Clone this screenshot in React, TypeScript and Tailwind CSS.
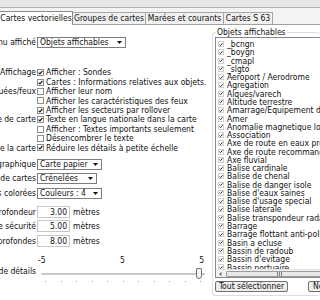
import React from 'react';

const items = [
  '_bcngn', '_boygn', '_cmapl', '_slgto', 'Aeroport / Aerodrome', 'Agregation', 'Alques/varech',
  'Altitude terrestre', 'Amarrage/Equipement de mouillage', 'Amer', 'Anomalie magnetique locale',
  'Association', 'Axe de route en eaux profondes', 'Axe de route recommande', 'Axe fluvial',
  'Balise cardinale', 'Balise de chenal', 'Balise de danger isole', "Balise d'eaux saines",
  "Balise d'usage special", 'Balise laterale', 'Balise transpondeur radar', 'Barrage',
  'Barrage flottant anti-pollution', 'Basin a ecluse', 'Bassin de radoub', "Bassin d'evitage",
];

const Tick = () => (
  <svg width="5" height="5" viewBox="0 0 5 5">
    <path d="M0.6 2.6 L1.9 3.9 L4.4 1" stroke="#1a1a1a" strokeWidth="1.2" fill="none" />
  </svg>
);

const Check = ({ on, label }: { on: boolean; label: string }) => (
  <div className="flex h-[9.4px] items-center gap-[2px] whitespace-nowrap">
    <span className="flex h-[7px] w-[7px] shrink-0 items-center justify-center border border-[#8e8f8f] bg-white">
      {on && <Tick />}
    </span>
    <span>{label}</span>
  </div>
);

const Arrow = () => (
  <svg width="5" height="3" viewBox="0 0 5 3">
    <path d="M0 0 H5 L2.5 3 Z" fill="#111" />
  </svg>
);

const Select = ({ value, w }: { value: string; w: string }) => (
  <div className={`flex h-[11px] items-center justify-between border border-[#7d7d7d] bg-white pl-[2px] pr-[3px] ${w}`}>
    <span className="whitespace-nowrap">{value}</span>
    <Arrow />
  </div>
);

const Label = ({ text, h }: { text: string; h: string }) => (
  <div className={`flex w-[36px] shrink-0 items-center justify-end whitespace-nowrap ${h}`}>{text}</div>
);

const Depth = ({ label, value }: { label: string; value: string }) => (
  <div className="flex h-[14.5px] items-center">
    <Label text={label} h="h-[12px]" />
    <div className="ml-[1px] flex h-[12px] w-[33px] items-center justify-end border border-[#c8c8c8] bg-white pr-[2px]">
      {value}
    </div>
    <span className="ml-[3px]">mètres</span>
  </div>
);

export default function App() {
  return (
    <div className="h-[300px] w-[320px] overflow-hidden bg-white font-['DejaVu_Sans_Condensed','DejaVu_Sans',sans-serif] text-[8.5px] leading-none text-[#111]">
      <div className="h-[8px] border-b border-[#b4b4b4] bg-[#e6e6e6]" />
      <div className="flex h-[17px] items-end border-b border-[#9f9f9f] bg-[#f3f3f3]">
        <div className="relative z-10 -mb-px flex h-[14px] w-[73px] items-center justify-center whitespace-nowrap border-r border-t border-[#8c8c8c] bg-white">
          Cartes vectorielles
        </div>
        <div className="flex h-[12px] w-[73px] items-center justify-center whitespace-nowrap border-r border-t border-[#a6a6a6] bg-[#f0f0f0]">
          Groupes de cartes
        </div>
        <div className="flex h-[12px] w-[78px] items-center justify-center whitespace-nowrap border-r border-t border-[#a6a6a6] bg-[#f0f0f0]">
          Marées et courants
        </div>
        <div className="flex h-[12px] w-[49px] items-center justify-center whitespace-nowrap border-r border-t border-[#a6a6a6] bg-[#f0f0f0]">
          Cartes S 63
        </div>
      </div>

      <div className="flex h-[275px]">
        <div className="flex w-[212px] shrink-0 flex-col pt-[12px]">
          <div className="flex items-center">
            <Label text="Menu affiché" h="h-[11px]" />
            <div className="ml-[1px]">
              <Select value="Objets affichables" w="w-[89px]" />
            </div>
          </div>

          <div className="mt-[20px] flex items-start">
            <Label text="Affichage" h="h-[9.4px]" />
            <div className="ml-[1px]">
              <Check on label="Afficher : Sondes" />
              <Check on label="Cartes : Informations relatives aux objets." />
            </div>
          </div>
          <div className="flex items-start">
            <Label text="Bouées/feux" h="h-[9.4px]" />
            <div className="ml-[1px]">
              <Check on={false} label="Afficher leur nom" />
              <Check on={false} label="Afficher les caractéristiques des feux" />
              <Check on label="Afficher les secteurs par rollover" />
            </div>
          </div>
          <div className="flex items-start">
            <Label text="Texte de carte" h="h-[9.4px]" />
            <div className="ml-[1px]">
              <Check on label="Texte en langue nationale dans la carte" />
              <Check on={false} label="Afficher : Textes importants seulement" />
              <Check on={false} label="Désencombrer le texte" />
            </div>
          </div>
          <div className="flex items-start">
            <Label text="Détails de la carte" h="h-[9.4px]" />
            <div className="ml-[1px]">
              <Check on label="Réduire les détails à petite échelle" />
            </div>
          </div>

          <div className="mt-[6px] flex flex-col gap-[3.5px]">
            <div className="flex items-center">
              <Label text="Style graphique" h="h-[11px]" />
              <div className="ml-[1px]"><Select value="Carte papier" w="w-[65px]" /></div>
            </div>
            <div className="flex items-center">
              <Label text="Limites de cartes" h="h-[11px]" />
              <div className="ml-[1px]"><Select value="Crénelées" w="w-[60px]" /></div>
            </div>
            <div className="flex items-center">
              <Label text="Zones colorées" h="h-[11px]" />
              <div className="ml-[1px]"><Select value="Couleurs : 4" w="w-[65px]" /></div>
            </div>
          </div>

          <div className="mt-[6px] flex flex-col">
            <Depth label="Faible profondeur" value="3.00" />
            <Depth label="Profondeur de sécurité" value="5.00" />
            <Depth label="Eaux profondes" value="8.00" />
          </div>

          <div className="mt-[8px] flex items-center">
            <Label text="Niveau de détails" h="h-[30px]" />
            <div className="relative ml-[1px] h-[30px] w-[172px]">
              <div className="flex h-[8px] items-center justify-between pl-[1px] pr-[5px]">
                <span>-5</span>
                <span>5</span>
                <span>5</span>
              </div>
              <div className="mt-[8px] flex h-[3px] items-center px-[4px]">
                <div className="h-[2px] w-full rounded-full border-y border-[#c9c9c9] bg-[#e4e4e4]" />
              </div>
              <div className="absolute right-[7px] top-[12px] h-[11px] w-[6px] rounded-b-[3px] rounded-t-[1px] border border-[#6d6d6d] bg-[#f4f4f4]" />
              <div className="mt-[6px] flex justify-between pl-[8px] pr-[8px]">
                {Array.from({ length: 11 }).map((_, i) => (
                  <span key={i} className="h-[1px] w-[1px] bg-[#9a9a9a]" />
                ))}
              </div>
            </div>
          </div>
        </div>

        <fieldset className="mt-[3px] h-[268px] min-w-0 flex-1 rounded-[3px] border border-r-0 border-[#d5dfe5] pl-[2px]">
          <legend className="ml-[1px] px-[1px] leading-[9px]">Objets affichables</legend>
          <div className="flex h-[241px] w-[120px] flex-col overflow-hidden border border-[#828790] bg-white">
            <div className="min-h-0 flex-1 overflow-hidden pt-[2px] pl-[2px]">
              {items.map((t) => (
                <div key={t} className="flex h-[8.28px] items-center gap-[3px] whitespace-nowrap leading-[8px]">
                  <span className="flex h-[6px] w-[6px] shrink-0 items-center justify-center border border-[#d0d0d0] bg-white">
                    <Tick />
                  </span>
                  <span>{t}</span>
                </div>
              ))}
              <div className="flex h-[8.28px] items-start gap-[3px] overflow-hidden whitespace-nowrap leading-[8px]">
                <span className="mt-[1px] flex h-[6px] w-[6px] shrink-0 items-center justify-center border border-[#d0d0d0] bg-white">
                  <Tick />
                </span>
                <span className="mt-[1px]">Bassin portuaire</span>
              </div>
            </div>
            <div className="flex h-[8px] shrink-0 items-center border-t border-[#e4e4e4] bg-[#f0f0f0] px-[1px]">
              <svg width="7" height="6" viewBox="0 0 7 6">
                <path d="M4.5 1 L2 3 L4.5 5 Z" fill="#606060" />
              </svg>
              <div className="ml-[2px] flex h-[6px] flex-1 items-center justify-center rounded-[1px] border border-[#9c9c9c] bg-[#e8e8e8]">
                <svg width="6" height="4" viewBox="0 0 6 4">
                  <path d="M0.5 0 V4 M2.5 0 V4 M4.5 0 V4" stroke="#808080" strokeWidth="1" />
                </svg>
              </div>
            </div>
          </div>
          <div className="mt-[3px] flex gap-[20px] whitespace-nowrap">
            <div className="flex h-[11px] w-[73px] shrink-0 items-center justify-center rounded-[2px] border border-[#707070] bg-[#ededed]">
              Tout sélectionner
            </div>
            <div className="flex h-[11px] w-[80px] shrink-0 items-center rounded-[2px] border border-[#707070] bg-[#ededed] pl-[4px]">
              Ne rien sélectionner
            </div>
          </div>
        </fieldset>
      </div>
    </div>
  );
}
